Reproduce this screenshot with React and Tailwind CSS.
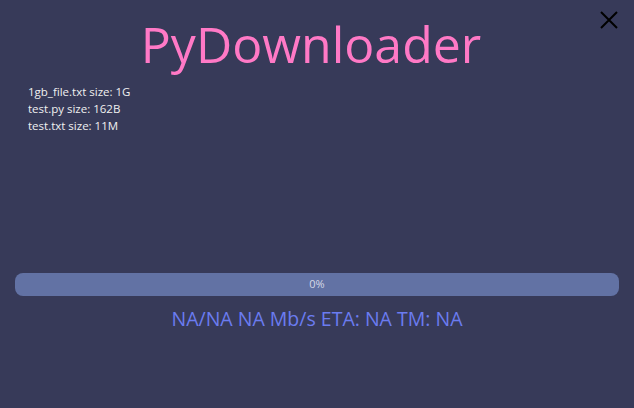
const files = [
  { name: "1gb_file.txt", size: "1G" },
  { name: "test.py", size: "162B" },
  { name: "test.txt", size: "11M" },
];

const App = () => {
  return (
    <div
      className="flex h-[408px] w-[634px] flex-col bg-[#373a59]"
      style={{ fontFamily: '"Open Sans", "Noto Sans", sans-serif' }}
    >
      <div className="relative flex justify-center pt-[6px] pr-[12px]">
        <h1 className="text-[50px] leading-[76px] text-[#ff79c6]">
          PyDownloader
        </h1>
        <button className="absolute right-[16px] top-[11px] text-black">
          <svg width="18" height="18" viewBox="0 0 18 18">
            <path d="M1 1L17 17M17 1L1 17" stroke="#000" strokeWidth="2" />
          </svg>
        </button>
      </div>

      <div className="px-[28px] pt-[1px] text-[11.5px] leading-[17px] text-[#f0f0f0]">
        {files.map((file) => (
          <div key={file.name}>
            {file.name} size: {file.size}
          </div>
        ))}
      </div>

      <div className="mt-[139px] px-[15px]">
        <div className="flex h-[23px] items-center justify-center rounded-[8px] bg-[#6272a4] text-[11px] text-[#d6d8e6]">
          0%
        </div>
      </div>

      <div className="mt-[9px] text-center text-[19.5px] leading-[28px] text-[#6b7cf0]">
        NA/NA NA Mb/s ETA: NA TM: NA
      </div>
    </div>
  );
};

export default App;
